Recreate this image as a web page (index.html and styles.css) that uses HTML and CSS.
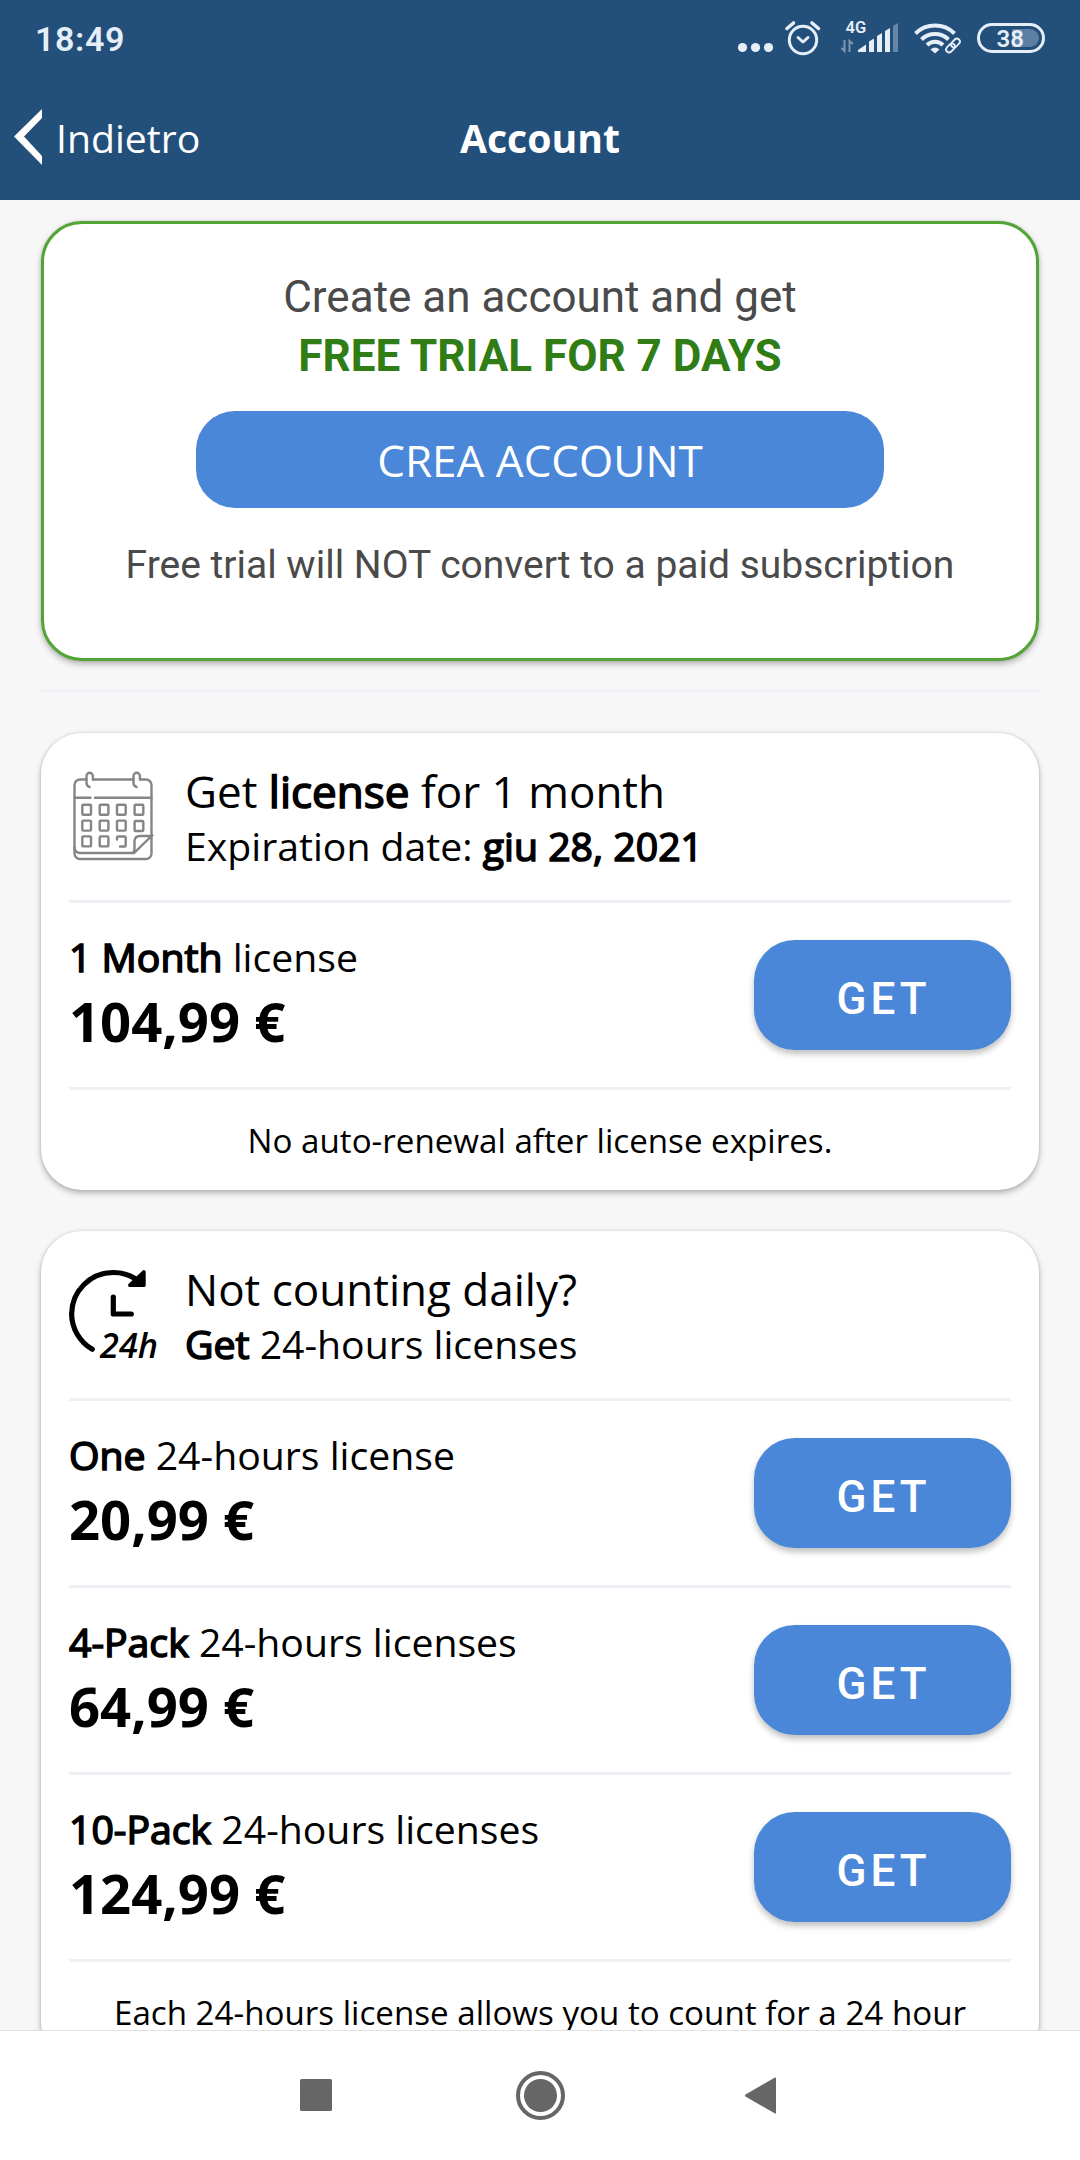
FILE: index.html
```html
<!DOCTYPE html>
<html lang="it">
<head>
  <meta charset="UTF-8" />
  <meta name="viewport" content="width=device-width, initial-scale=1.0"/>
  <title>Account</title>
  <link rel="stylesheet" href="styles.css">
</head>
<body>
  <div class="status-bar">
    <span class="time">18:49</span>
    <svg class="status-icons" width="310" height="40" viewBox="736 18 310 40">
      <g fill="#e6eef8">
        <circle cx="742.5" cy="47.5" r="4.6"/>
        <circle cx="755.5" cy="47.5" r="4.6"/>
        <circle cx="768.5" cy="47.5" r="4.6"/>
      </g>
      <g fill="none" stroke="#e6eef8" stroke-width="3" stroke-linecap="round">
        <circle cx="803" cy="40" r="13.7"/>
        <path d="M798 37.5l5 4.500 5-4.500" stroke-linejoin="round"/>
        <path d="M787 28.500l6.500-5.500M818.500 28.500l-6.500-5.500" stroke-width="3.600"/>
      </g>
      <text class="net-type" x="845.500" y="33">4G</text>
      <g fill="#e6eef8">
        <path d="M858 52v-2l8-5.500V52z"/>
        <path d="M869 41.500l5-3V52h-5zM877 36l5-3V52h-5zM885 31l5-3V52h-5z"/>
        <path d="M893 26l5-3V52h-5z" opacity=".35"/>
        <path d="M844.500 40v11l-3-3M849.500 52V41l3.500 3" fill="none" stroke="#e6eef8" stroke-width="2" opacity=".45"/>
      </g>
      <g fill="none" stroke="#e6eef8" stroke-width="4">
        <path d="M915.500 33.500a28 28 0 0 1 39 0"/>
        <path d="M921.500 39.500a19.500 19.500 0 0 1 27 0"/>
        <path d="M927 45a11.500 11.500 0 0 1 16 0"/>
      </g>
      <path d="M930.500 49.500q4.500-4 9 0l-4.500 4z" fill="#e6eef8"/>
      <g fill="none" stroke="#234f7b" stroke-width="5" transform="rotate(-45 953 45.500)">
        <rect x="944.500" y="42.500" width="17" height="6" rx="3"/>
      </g>
      <g fill="none" stroke="#e6eef8" stroke-width="1.800" transform="rotate(-45 953 45.500)">
        <rect x="944.500" y="42.500" width="10" height="6" rx="3"/>
        <rect x="951.500" y="42.500" width="10" height="6" rx="3"/>
      </g>
      <rect x="978.500" y="24.500" width="65" height="27" rx="13.500" fill="none" stroke="#e6eef8" stroke-width="3"/>
      <path d="M1012 29h18a9 9 0 0 1 0 18h-18z" fill="#e6eef8" opacity=".3"/>
      <text class="battery" x="996.500" y="46.500">38</text>
    </svg>
  </div>

  <div class="nav-bar">
    <div class="back">
      <svg width="29" height="58" viewBox="0 0 29 58"><path d="M28 1v9L10 28.500 28 48v9L0 28.500z" fill="#fff"/></svg>
      <span>Indietro</span>
    </div>
    <div class="title">Account</div>
  </div>

  <div class="content">
    <div class="card trial">
      <div class="trial-text">Create an account and get</div>
      <div class="trial-offer">FREE TRIAL FOR 7 DAYS</div>
      <button class="create">CREA ACCOUNT</button>
      <div class="trial-note">Free trial will NOT convert to a paid subscription</div>
    </div>

    <div class="divider"></div>

    <div class="card">
      <div class="card-head">
        <svg class="head-icon" width="92" height="92" viewBox="0 0 92 92" fill="none" stroke="#858585" stroke-width="2.400" stroke-linecap="round">
          <!-- sheet and rings -->
          <path d="M17.500 8.500H11a5.500 5.500 0 0 0-5.500 5.500v68.500A5.500 5.500 0 0 0 11 88h66a5.500 5.500 0 0 0 5.500-5.500V14A5.500 5.500 0 0 0 77 8.500h-5.500M24 8.500h40.500"/>
          <path d="M20.500 16q-3-1-3-4V5a3.200 3.200 0 0 1 6.400 0v3.500M67.500 16q-3-1-3-4V5a3.200 3.200 0 0 1 6.400 0v3.500"/>
          <path d="M5.500 26.700h16M26 26.700h56.500"/>
          <!-- folded corner -->
          <path d="M5.500 76q0 6 6 6H65L82.500 65H71q-5 0-5.500 5v8q0 3-2 4"/>
          <!-- days -->
          <g>
            <rect x="13.300" y="33.700" width="8.700" height="10" rx="1"/>
            <rect x="30.700" y="33.700" width="8.700" height="10" rx="1"/>
            <rect x="48" y="33.700" width="8.700" height="10" rx="1"/>
            <rect x="65.600" y="33.700" width="8.700" height="10" rx="1"/>
            <rect x="13.300" y="49.600" width="8.700" height="10" rx="1"/>
            <rect x="30.700" y="49.600" width="8.700" height="10" rx="1"/>
            <rect x="48" y="49.600" width="8.700" height="10" rx="1"/>
            <rect x="65.600" y="50" width="8.700" height="10" rx="1"/>
            <rect x="13.300" y="65.400" width="8.700" height="10" rx="1"/>
            <rect x="30.700" y="65.400" width="8.700" height="10" rx="1"/>
            <path d="M48 68.500v-2q0-1 1-1h6.700q1 0 1 1v8q0 1-1 1H51"/>
          </g>
        </svg>
        <div>
          <div class="head-title">Get <b>license</b> for 1 month</div>
          <div class="head-sub">Expiration date: <b>giu 28, 2021</b></div>
        </div>
      </div>
      <div class="row">
        <div>
          <div class="name"><b>1 Month</b> license</div>
          <div class="price">104,99 €</div>
        </div>
        <button class="get">GET</button>
      </div>
      <div class="note">No auto-renewal after license expires.</div>
    </div>

    <div class="card">
      <div class="card-head">
        <svg class="head-icon" width="92" height="92" viewBox="0 0 92 92">
          <g fill="none" stroke="#000" stroke-width="5.200" stroke-linecap="round" stroke-linejoin="round">
            <path d="M66 9.500A41.700 41.700 0 0 0 44.300 3.500A41.700 41.700 0 0 0 2.600 45.200A41.700 41.700 0 0 0 23.300 80.300"/>
            <path d="M44.300 28V45h18"/>
          </g>
          <path d="M74.800 3v13.200H61z" stroke="#000" stroke-width="3.800" stroke-linejoin="round"/>
          <text class="hours" x="31" y="88.800" textLength="58" lengthAdjust="spacingAndGlyphs">24h</text>
        </svg>
        <div>
          <div class="head-title">Not counting daily?</div>
          <div class="head-sub"><b>Get</b> 24-hours licenses</div>
        </div>
      </div>
      <div class="row">
        <div>
          <div class="name"><b>One</b> 24-hours license</div>
          <div class="price">20,99 €</div>
        </div>
        <button class="get">GET</button>
      </div>
      <div class="row">
        <div>
          <div class="name"><b>4-Pack</b> 24-hours licenses</div>
          <div class="price">64,99 €</div>
        </div>
        <button class="get">GET</button>
      </div>
      <div class="row">
        <div>
          <div class="name"><b>10-Pack</b> 24-hours licenses</div>
          <div class="price">124,99 €</div>
        </div>
        <button class="get">GET</button>
      </div>
      <div class="note">Each 24-hours license allows you to count for a 24 hour</div>
    </div>
  </div>

  <div class="system-nav">
    <svg width="480" height="60" viewBox="300 2065 480 60" fill="#666">
      <rect x="300" y="2079" width="32" height="32" rx="1.500"/>
      <circle cx="540.500" cy="2095.500" r="16.500"/>
      <circle cx="540.500" cy="2095.500" r="22.500" fill="none" stroke="#666" stroke-width="4"/>
      <path d="M745.500 2094.500L775 2077.500q1-.5 1 1v34q0 1.500-1 1L745.500 2096.500q-1-1 0-2z"/>
    </svg>
  </div>
</body>
</html>
```
FILE: styles.css
```css
* {
  box-sizing: border-box;
}

body {
  margin: 0;
  height: 2160px;
  display: flex;
  flex-direction: column;
  overflow: hidden;
  font-family: 'Open Sans', sans-serif;
  color: #000;
  background: #f7f7f7;
}

.status-bar {
  height: 76px;
  flex: none;
  display: flex;
  justify-content: space-between;
  padding: 18px 34px 0 35px;
  background: #234f7b;
}

.time {
  font-family: Roboto, sans-serif;
  font-weight: 600;
  font-size: 34px;
  line-height: 42px;
  letter-spacing: 0.6px;
  color: #e6eef8;
}

.net-type {
  font: 600 16.5px Roboto, sans-serif;
  fill: #e6eef8;
}

.battery {
  font: 600 24px Roboto, sans-serif;
  fill: #e6eef8;
}

.hours {
  font: italic 600 34.5px 'Open Sans', sans-serif;
}

.nav-bar {
  height: 124px;
  flex: none;
  display: grid;
  grid-template-columns: 1fr auto 1fr;
  align-items: center;
  padding: 0 14px 2px;
  background: #234f7b;
  color: #fff;
}

.back {
  display: flex;
  align-items: center;
  gap: 13px;
  font-size: 39.2px;
}

.title {
  font-size: 39.2px;
  font-weight: 700;
}

.content {
  flex: 1;
  min-height: 0;
  overflow: hidden;
  padding: 20px 41px 0;
  border-top: 1px solid #eef8fc;
}

.card {
  background: #fff;
  border-radius: 41px;
  padding: 0 28px;
  margin-bottom: 41px;
  box-shadow: 0 3px 6px rgba(0, 0, 0, 0.28), 0 0 3px rgba(0, 0, 0, 0.12);
}

.trial {
  height: 440px;
  border: 3px solid #52a535;
  padding-top: 44px;
  margin-bottom: 28px;
  text-align: center;
  font-family: Roboto, sans-serif;
  color: #4a4a4a;
}

.trial-text,
.trial-offer {
  font-size: 44px;
  line-height: 59px;
}

.trial-offer {
  font-weight: 700;
  color: #2f7d14;
}

button {
  border: none;
  padding: 0;
  color: #fff;
  background: #4a87d9;
}

.create {
  display: block;
  width: 688px;
  height: 97px;
  margin: 25px auto 32px;
  border-radius: 39px;
  font-family: 'Open Sans', sans-serif;
  font-size: 44px;
}

.trial-note {
  font-size: 39px;
  line-height: 50px;
}

.divider {
  height: 3px;
  background: #f0eff6;
  margin-bottom: 41px;
}

/* regular face thickened with a stroke so the widths stay the same */
b {
  font-weight: 400;
  -webkit-text-stroke: 1.6px #000;
}

.card-head {
  height: 170px;
  display: flex;
  padding-top: 28px;
  border-bottom: 3px solid #f0eff6;
}

.head-icon {
  flex: none;
  overflow: visible;
  margin-top: 10px;
  margin-right: 24px;
}

.head-title {
  font-size: 44px;
  line-height: 60px;
}

.head-sub {
  font-size: 39.2px;
  line-height: 50px;
}

.row {
  height: 187px;
  display: flex;
  justify-content: space-between;
  align-items: center;
  border-bottom: 3px solid #f0eff6;
}

.name {
  font-size: 39.2px;
  line-height: 52px;
}

.price {
  font-size: 54.4px;
  line-height: 77px;
  font-weight: 700;
}

.get {
  width: 257px;
  height: 110px;
  padding: 7px 0 0 2px;
  border-radius: 41px;
  font-family: Roboto, sans-serif;
  font-weight: 500;
  font-size: 44px;
  letter-spacing: 4px;
  box-shadow: 0 4px 6px rgba(0, 0, 0, 0.25);
}

.note {
  height: 100px;
  padding-top: 28px;
  text-align: center;
  font-size: 33.15px;
  line-height: 45px;
}

.system-nav {
  height: 130px;
  flex: none;
  display: flex;
  justify-content: center;
  align-items: center;
  padding-bottom: 1px;
  border-top: 1px solid #e2e2e2;
  background: #fff;
}
```
